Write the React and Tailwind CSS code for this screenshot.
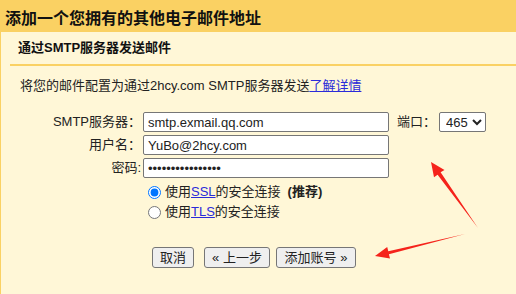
import { useState } from "react";

const font = { fontFamily: '"Liberation Sans", "Noto Sans CJK SC", sans-serif' };

export default function App() {
  const [tls, setTls] = useState("ssl");

  return (
    <div
      className="relative w-[516px] h-[294px] overflow-hidden bg-[#fff7d7] border-l border-[#fad163] text-[13px] text-[#222]"
      style={font}
    >
      {/* title bar */}
      <div className="h-[32px] bg-[#fad163] pl-[4px] pt-[5px] flex items-center">
        <h1 className="text-[16px] font-bold leading-[20px] text-[#111]">添加一个您拥有的其他电子邮件地址</h1>
      </div>

      {/* step heading */}
      <div className="ml-[9px] h-[34px] border-b-2 border-[#fad163] pl-[8px] flex items-center">
        <h2 className="text-[13px] font-bold leading-[16px] text-[#111]">通过SMTP服务器发送邮件</h2>
      </div>

      <p className="pl-[19px] pt-[12px] leading-[16px]">
        将您的邮件配置为通过2hcy.com SMTP服务器发送
        <a href="#" className="text-[#2b2bd9] underline">了解详情</a>
      </p>

      {/* form */}
      <div className="mt-[18px] flex flex-col gap-[3px]">
        <div className="flex items-center h-[20px]">
          <label className="w-[140px] text-right leading-[16px]">SMTP服务器：</label>
          <input
            defaultValue="smtp.exmail.qq.com"
            className="ml-[2px] w-[246px] h-[20px] bg-white border border-[#767676] rounded-[2px] pl-[4px] text-[13px] outline-none"
          />
          <span className="ml-[8px] leading-[16px]">端口：</span>
          <select
            defaultValue="465"
            className="ml-[3px] w-[47px] h-[20px] bg-white border border-[#767676] rounded-[2px] text-[13px] pl-[2px]"
          >
            <option value="25">25</option>
            <option value="465">465</option>
            <option value="587">587</option>
          </select>
        </div>
        <div className="flex items-center h-[20px]">
          <label className="w-[140px] text-right leading-[16px]">用户名：</label>
          <input
            defaultValue="YuBo@2hcy.com"
            className="ml-[2px] w-[246px] h-[20px] bg-white border border-[#767676] rounded-[2px] pl-[4px] text-[13px] outline-none"
          />
        </div>
        <div className="flex items-center h-[20px]">
          <label className="w-[140px] text-right leading-[16px]">密码:</label>
          <input
            type="password"
            defaultValue="abcdefghijklmnop"
            className="ml-[2px] w-[246px] h-[20px] bg-white border border-[#767676] rounded-[2px] pl-[4px] text-[13px] outline-none"
          />
        </div>
      </div>

      {/* security */}
      <div className="mt-[4px] ml-[147px] flex flex-col">
        <label className="flex items-center h-[20px] gap-[4px]">
          <input
            type="radio"
            name="sec"
            checked={tls === "ssl"}
            onChange={() => setTls("ssl")}
            className="m-0 w-[13px] h-[13px]"
          />
          <span className="leading-[16px]">
            使用<a href="#" className="text-[#2b2bd9] underline">SSL</a>的安全连接<span className="font-bold ml-[7px]">(推荐)</span>
          </span>
        </label>
        <label className="flex items-center h-[20px] gap-[4px]">
          <input
            type="radio"
            name="sec"
            checked={tls === "tls"}
            onChange={() => setTls("tls")}
            className="m-0 w-[13px] h-[13px]"
          />
          <span className="leading-[16px]">
            使用<a href="#" className="text-[#2b2bd9] underline">TLS</a>的安全连接
          </span>
        </label>
      </div>

      {/* buttons */}
      <div className="mt-[25px] ml-[151px] flex items-center">
        <button className="h-[21px] w-[42px] bg-[#efefef] border border-[#767676] rounded-[3px] text-[13px] leading-[16px]">
          取消
        </button>
        <button className="ml-[10px] h-[21px] w-[66px] bg-[#efefef] border border-[#767676] rounded-[3px] text-[13px] leading-[16px]">
          « 上一步
        </button>
        <button className="ml-[6px] h-[21px] w-[80px] bg-[#efefef] border border-[#767676] rounded-[3px] text-[13px] leading-[16px]">
          添加账号 »
        </button>
      </div>

      {/* annotation arrows */}
      <svg className="absolute left-[-1px] top-0 pointer-events-none" width="516" height="294" viewBox="0 0 516 294">
        <polygon
          points="431,162 444.5,170 440.6,172.3 478,228 437.6,174.7 434,177.3"
          fill="#f5231b"
        />
        <polygon
          points="375,256 387.2,246.9 388.3,251.2 465,234 388.9,254.3 390,258.5"
          fill="#f5231b"
        />
      </svg>
    </div>
  );
}
